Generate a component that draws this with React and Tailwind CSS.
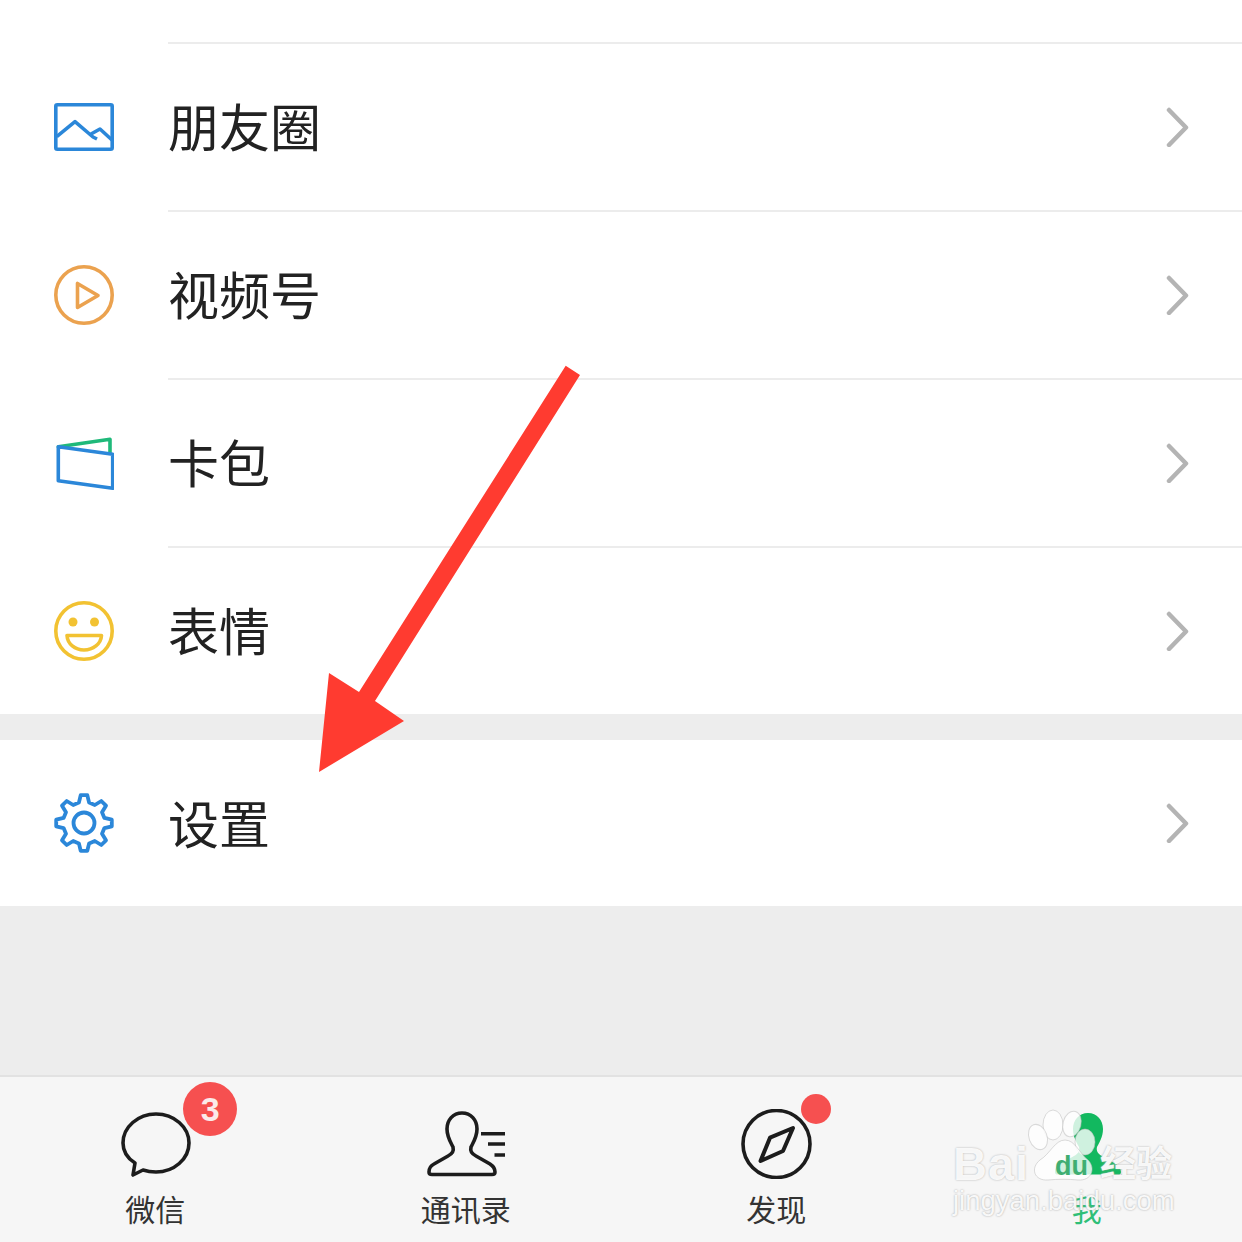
const gearPath = () => {
    // eight rounded teeth round the centre of a 60 box
    const pts = []
    for (let i = 0; i < 8; i++) {
        const a = (i * Math.PI) / 4 - Math.PI / 2
        const step = Math.PI / 8
        const at = (r, t) => `${(30 + r * Math.cos(t)).toFixed(1)} ${(30 + r * Math.sin(t)).toFixed(1)}`
        pts.push(at(21, a - step * 0.62), at(28, a - step * 0.3), at(28, a + step * 0.3), at(21, a + step * 0.62))
    }
    return 'M' + pts.join(' L') + ' Z'
}

const personPath =
    'M36 4C27 4 21 11 21 20C21 28 25 34 27 38C28 42 26 45 22 47L8 55C4 57 3 60 3 63C3 65 4 65.5 6 65.5H66C68 65.5 69 65 69 63C69 60 67 57 64 55L50 47C46 45 44 42 45 38C47 34 51 28 51 20C51 11 45 4 36 4Z'

const MomentsIcon = () => (
    <svg width="60" height="60" viewBox="0 0 60 60" fill="none" stroke="#2b87d9" strokeWidth="3.6" strokeLinejoin="round">
        <rect x="1.8" y="7.8" width="56.4" height="44.4" rx="1.5" />
        <path d="M2.7 39.7L21 24.7L39 40L43 42M37 37L46 32L58 43" />
    </svg>
)

const ChannelsIcon = () => (
    <svg width="60" height="60" viewBox="0 0 60 60" fill="none" stroke="#eba24f" strokeWidth="3.6" strokeLinejoin="round">
        <circle cx="30" cy="30" r="28.2" />
        <path d="M23.5 18.5V42.5L44 30.5Z" />
    </svg>
)

const WalletIcon = () => (
    <svg width="60" height="60" viewBox="0 0 60 60" fill="none" strokeWidth="3.6" strokeLinejoin="round" strokeLinecap="round">
        <path d="M4.3 13.7L56 6.3V19.5" stroke="#1fb97a" />
        <path d="M4.3 13.7L58.7 21.3V55.3L4.3 47.7Z" stroke="#2b87d9" />
    </svg>
)

const StickerIcon = () => (
    <svg width="60" height="60" viewBox="0 0 60 60" fill="none" stroke="#f2c232" strokeWidth="3.6" strokeLinejoin="round">
        <circle cx="30" cy="30" r="28.2" />
        <circle cx="19" cy="21" r="4.5" fill="#f2c232" stroke="none" />
        <circle cx="40.5" cy="21" r="4.5" fill="#f2c232" stroke="none" />
        <path d="M13 34.5H47.5C47 43 39 49 30 49C21 49 13.5 43 13 34.5Z" />
    </svg>
)

const SettingsIcon = () => (
    <svg width="60" height="60" viewBox="0 0 60 60" fill="none" stroke="#2b87d9" strokeWidth="3.8" strokeLinejoin="round">
        <path d={gearPath()} />
        <circle cx="30" cy="30" r="10.5" />
    </svg>
)

const Chevron = () => (
    <svg width="24" height="40" viewBox="0 0 24 40" fill="none" stroke="#b4b4b4" strokeWidth="4.5" strokeLinecap="round" strokeLinejoin="round">
        <path d="M3 3L20 20.5L3 38" />
    </svg>
)

const ChatIcon = () => (
    <svg width="80" height="70" viewBox="0 0 80 70" fill="none" stroke="#1c1c1c" strokeWidth="3.6" strokeLinejoin="round">
        <path d="M18 66L20 54C12 49 8 42 8 34C8 18 23 5 41 5C59 5 74 18 74 34C74 50 59 63 41 63C36 63 31 62 28 61Z" />
    </svg>
)

const ContactsIcon = () => (
    <svg width="80" height="70" viewBox="0 0 80 70" fill="none" stroke="#1c1c1c" strokeWidth="3.6">
        <path d={personPath} />
        <path d="M55 24.7H79M62 35H79M68.5 46H79" />
    </svg>
)

const CompassIcon = () => (
    <svg width="80" height="70" viewBox="0 0 80 70" fill="none" stroke="#1c1c1c" strokeWidth="3.6" strokeLinejoin="round">
        <circle cx="40.5" cy="35" r="33.5" />
        <path d="M57 19L47 42L24.5 52L34 28.7Z" strokeWidth="4" />
    </svg>
)

const MeIcon = () => (
    <svg width="80" height="70" viewBox="0 0 80 70" fill="#12b85f">
        <path d={personPath} transform="translate(5 0)" />
    </svg>
)

const rows = [
    { label: '朋友圈', Icon: MomentsIcon },
    { label: '视频号', Icon: ChannelsIcon },
    { label: '卡包', Icon: WalletIcon },
    { label: '表情', Icon: StickerIcon }
]

const Row = ({ label, Icon, height }) => (
    <div className={`flex items-center pl-[54px] pr-[52px] ${height}`}>
        <Icon />
        <span className="mb-[2px] ml-[54px] text-[51px] leading-none text-[#222222]">{label}</span>
        <div className="ml-auto flex">
            <Chevron />
        </div>
    </div>
)

const Tab = ({ label, Icon, active, children }) => (
    <div className="flex flex-col items-center pt-[32px]">
        <div className="relative h-[70px] w-[80px]">
            <Icon />
            {children}
        </div>
        <span className={`mt-[11px] text-[30px] leading-[36px] ${active ? 'text-[#2fbf78]' : 'text-[#333333]'}`}>{label}</span>
    </div>
)

const App = () => {
    return (
        <div className="relative flex h-[1242px] w-[1242px] flex-col overflow-hidden bg-[#ededed] font-['Noto_Sans_CJK_SC','Liberation_Sans',sans-serif]">
            {/* Menu list */}
            <div className="bg-white">
                <div className="h-[42px]" />
                {rows.map(({ label, Icon }) => (
                    <div key={label}>
                        <div className="ml-[168px] h-[1.5px] bg-[#ececec]" />
                        <Row label={label} Icon={Icon} height="h-[166.5px]" />
                    </div>
                ))}
            </div>

            <div className="mt-[26px] bg-white">
                <Row label="设置" Icon={SettingsIcon} height="h-[166px]" />
            </div>

            <div className="flex-1" />

            {/* Tab bar */}
            <div className="grid h-[167px] grid-cols-4 border-t-2 border-[#e2e2e2] bg-[#f6f6f6]">
                <Tab label="微信" Icon={ChatIcon}>
                    <span className="absolute left-[68px] top-[-27px] flex h-[54px] w-[54px] items-center justify-center rounded-full bg-[#f65050] font-['Liberation_Sans',sans-serif] text-[34px] font-bold leading-none text-[#fbeaea]">
                        3
                    </span>
                </Tab>
                <Tab label="通讯录" Icon={ContactsIcon} />
                <Tab label="发现" Icon={CompassIcon}>
                    <span className="absolute left-[65px] top-[-15px] h-[30px] w-[30px] rounded-full bg-[#f65050]" />
                </Tab>
                <Tab label="我" Icon={MeIcon} active />
            </div>

            {/* Red arrow annotation */}
            <svg className="absolute left-0 top-0" width="1242" height="1242" viewBox="0 0 1242 1242" fill="#ff3b30">
                <path d="M565.7 365.7L580 375L375 701L404 721L319 772L329 673L359 692Z" />
            </svg>

            {/* Baidu watermark */}
            <div className="absolute left-[950px] top-[1104px] h-[115px] w-[230px]">
                <svg className="absolute left-0 top-0" width="230" height="90" viewBox="0 0 230 90" fill="#ffffff" fillOpacity="0.8" stroke="#bdbdbd" strokeOpacity="0.55">
                    <ellipse cx="103" cy="21" rx="10" ry="15" />
                    <ellipse cx="88" cy="33" rx="9" ry="13" transform="rotate(-20 88 33)" />
                    <ellipse cx="122" cy="20" rx="9" ry="13" transform="rotate(15 122 20)" />
                    <ellipse cx="135" cy="38" rx="10" ry="13" />
                    <path d="M115 36C125 36 130 50 138 56C146 64 142 77 128 76C118 75 108 75 98 76C84 77 80 64 90 56C100 50 105 36 115 36Z" />
                </svg>
                <span className="absolute left-[3px] top-[36px] font-['Liberation_Sans',sans-serif] text-[47px] font-bold leading-[47px] tracking-[1px] text-white/90 [text-shadow:0_0_2px_#a8a8a8]">
                    Bai
                </span>
                <span className="absolute left-[105px] top-[49px] font-['Liberation_Sans',sans-serif] text-[27px] font-bold leading-[27px] text-[#3fae72]">
                    du
                </span>
                <span className="absolute left-[150px] top-[33px] text-[36px] font-bold leading-[48px] text-white/90 [text-shadow:0_0_2px_#a8a8a8]">
                    经验
                </span>
                <span className="absolute left-[3px] top-[82px] font-['Liberation_Sans',sans-serif] text-[27.5px] leading-[30px] text-white/90 [text-shadow:0_0_2px_#a0a0a0]">
                    jingyan.baidu.com
                </span>
            </div>
        </div>
    )
}

export default App
